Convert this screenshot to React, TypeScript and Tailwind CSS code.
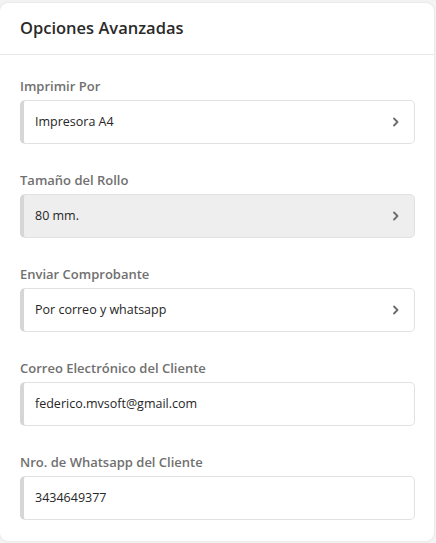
import React from "react";

const Chevron = () => (
  <svg width="10" height="12" viewBox="0 0 10 12" className="shrink-0">
    <path d="M3 2.5 L6.5 6 L3 9.5" fill="none" stroke="#6b6b6b" strokeWidth="1.8" strokeLinecap="round" strokeLinejoin="round" />
  </svg>
);

function Field({ label, value, select, disabled }: { label: string; value: string; select?: boolean; disabled?: boolean }) {
  return (
    <div className="flex flex-col">
      <div className="text-[13px] leading-[20px] font-semibold text-[#707070]">{label}</div>
      <div
        className={
          "mt-[4px] h-[44px] flex items-center rounded-[5px] border border-[#e1e1e1] border-l-[4px] border-l-[#d6d6d6] pl-[11px] pr-[13px] " +
          (disabled ? "bg-[#eeeeee]" : "bg-white")
        }
      >
        <span className="flex-1 text-[12.5px] text-[#262626]">{value}</span>
        {select && <Chevron />}
      </div>
    </div>
  );
}

export default function App() {
  return (
    <div className="w-[436px] h-[543px] bg-[#f3f3f3] pt-[3px] pr-[2px]" style={{ fontFamily: '"Open Sans", "Noto Sans", sans-serif' }}>
      <div className="bg-white rounded-[8px] h-[538px] shadow-[0_0_2px_rgba(0,0,0,0.12)] flex flex-col">
        <div className="h-[52px] border-b border-[#e8e8e8] flex items-center px-[20px]">
          <span className="text-[16.5px] font-semibold text-[#2a2a2a]">Opciones Avanzadas</span>
        </div>
        <div className="pl-[20px] pr-[19px] pt-[21px] flex flex-col gap-[26px]">
          <Field label="Imprimir Por" value="Impresora A4" select />
          <Field label="Tamaño del Rollo" value="80 mm." select disabled />
          <Field label="Enviar Comprobante" value="Por correo y whatsapp" select />
          <Field label="Correo Electrónico del Cliente" value="federico.mvsoft@gmail.com" />
          <Field label="Nro. de Whatsapp del Cliente" value="3434649377" />
        </div>
      </div>
    </div>
  );
}
